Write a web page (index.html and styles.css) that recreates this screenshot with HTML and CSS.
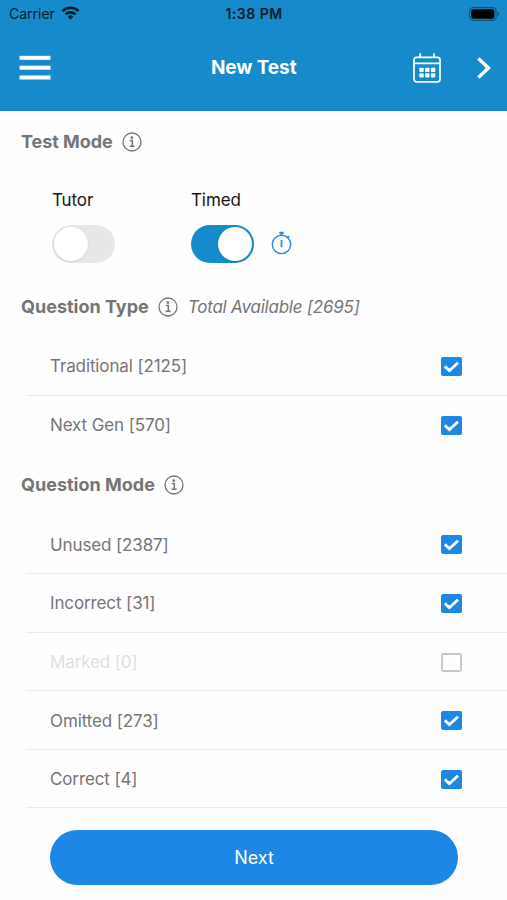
FILE: index.html
```html
<!DOCTYPE html>
<html lang="en">
<head>
<meta charset="utf-8">
<title>New Test</title>
<link rel="stylesheet" href="styles.css">
</head>
<body>
<svg class="defs" width="0" height="0">
  <symbol id="info" viewBox="0 0 20 20">
    <circle cx="10" cy="10" r="9" fill="none" stroke="currentColor" stroke-width="1.3"/>
    <circle cx="9.9" cy="5.6" r="1.35" fill="currentColor"/>
    <path d="M7.8 8.4h2.5v5.6M7.6 14.3h5" fill="none" stroke="currentColor" stroke-width="1.5"/>
  </symbol>
  <symbol id="check" viewBox="0 0 21 19">
    <rect width="21" height="19" rx="2" fill="#1e87e5"/>
    <path d="M3.8 9.4l4.6 4.2 8.6-7.8" fill="none" stroke="#fff" stroke-width="2.8"/>
  </symbol>
  <symbol id="empty" viewBox="0 0 21 19">
    <rect x="1" y="1" width="19" height="17" rx="1.5" fill="none" stroke="#c6c6c6" stroke-width="1.8"/>
  </symbol>
</svg>
<header class="header">
  <div class="status">
    <div class="carrier"><span>Carrier</span>
      <svg class="wifi" width="19" height="14" viewBox="0 0 18 14" fill="none" stroke="#071c28" stroke-width="2.6">
        <path d="M1 5.1a11.4 11.4 0 0 1 16 0M4 8.4a7.1 7.1 0 0 1 10 0"/>
        <path d="M9 13.6L6.1 10.8a4.1 4.1 0 0 1 5.8 0z" fill="#071c28" stroke="none"/>
      </svg>
    </div>
    <span class="time">1:38 PM</span>
    <svg class="battery" width="31" height="14" viewBox="0 0 31 14">
      <rect x=".6" y=".6" width="26.5" height="12.8" rx="3.5" fill="none" stroke="#0c5178" stroke-width="1.1"/>
      <rect x="2.2" y="2.2" width="23.2" height="9.6" rx="2" fill="#000"/>
      <path d="M28.5 4.8q3.2 2.2 0 4.4z" fill="#0c5178"/>
    </svg>
  </div>
  <nav class="nav">
    <svg class="menu" width="32" height="26" viewBox="0 0 32 26" fill="#fff">
      <rect x=".5" y=".8" width="31" height="4"/><rect x=".5" y="10.7" width="31" height="4"/><rect x=".5" y="20.5" width="31" height="4"/>
    </svg>
    <h1 class="title">New Test</h1>
    <div class="actions">
      <svg width="28" height="30" viewBox="0 0 28 30" fill="none" stroke="#fff" stroke-width="1.7">
        <rect x="1" y="4.3" width="26" height="24.5" rx="2.5"/>
        <path d="M1 10.4h26M7.2 .3v4.5M21 .3v4.5"/>
        <g fill="#fff" stroke="none">
          <rect x="6.3" y="14.8" width="4.4" height="4.2" rx=".8"/><rect x="12.1" y="14.8" width="4.4" height="4.2" rx=".8"/><rect x="17.9" y="14.8" width="4.4" height="4.2" rx=".8"/>
          <rect x="6.3" y="20.2" width="4.4" height="4.2" rx=".8"/><rect x="12.1" y="20.2" width="4.4" height="4.2" rx=".8"/><rect x="17.9" y="20.2" width="4.4" height="4.2" rx=".8"/>
        </g>
      </svg>
      <svg width="14" height="22" viewBox="0 0 14 22" fill="none" stroke="#fff" stroke-width="3.5">
        <path d="M1.4 1.4l10 9.6-10 9.6"/>
      </svg>
    </div>
  </nav>
</header>
<main>
  <div class="heading heading-mode"><h2>Test Mode</h2><svg class="info"><use href="#info"/></svg></div>
  <section class="modes">
    <div class="mode"><span class="label">Tutor</span><span class="switch"><span class="knob"></span></span></div>
    <div class="mode"><span class="label">Timed</span><span class="switch on"><span class="knob"></span></span></div>
    <svg class="timer" width="22" height="24" viewBox="0 0 22 24" fill="none" stroke="#2d88e6" stroke-width="1.4">
      <circle cx="10.5" cy="13.4" r="9.2"/>
      <path d="M10.5 9v7.2" stroke-width="1.7"/>
      <path d="M8.2 1.7h4.6M10.5 1.5v2.8" stroke-width="2"/>
      <path d="M16.8 6.5l1.2-1.3" stroke-width="2"/>
    </svg>
  </section>
  <div class="heading heading-type"><h2>Question Type</h2><svg class="info"><use href="#info"/></svg><em class="total">Total Available [2695]</em></div>
  <ul class="list">
    <li class="row"><span>Traditional [2125]</span><svg class="box"><use href="#check"/></svg></li>
    <li class="row last"><span>Next Gen [570]</span><svg class="box"><use href="#check"/></svg></li>
  </ul>
  <div class="heading heading-question"><h2>Question Mode</h2><svg class="info"><use href="#info"/></svg></div>
  <ul class="list">
    <li class="row"><span>Unused [2387]</span><svg class="box"><use href="#check"/></svg></li>
    <li class="row"><span>Incorrect [31]</span><svg class="box"><use href="#check"/></svg></li>
    <li class="row disabled"><span>Marked [0]</span><svg class="box"><use href="#empty"/></svg></li>
    <li class="row"><span>Omitted [273]</span><svg class="box"><use href="#check"/></svg></li>
    <li class="row"><span>Correct [4]</span><svg class="box"><use href="#check"/></svg></li>
  </ul>
  <button class="next">Next</button>
</main>
</body>
</html>
```
FILE: styles.css
```css
* { box-sizing: border-box; }
body { margin: 0; width: 507px; height: 900px; overflow: hidden; background: #fefefe; font-family: Inter, "Liberation Sans", sans-serif; color: #757575; }
h1, h2, ul { margin: 0; padding: 0; }
svg { display: block; flex: none; }
.defs { position: absolute; }
.header { height: 110.5px; background: #168acb; }
.status { display: grid; grid-template-columns: 1fr auto 1fr; align-items: center; height: 27px; padding: 0 7px 0 9px; color: #071c28; font-size: 14px; }
.carrier { display: flex; align-items: center; gap: 6px; }
.wifi { margin-top: -2px; }
.time { font-weight: 600; letter-spacing: .5px; margin-left: -1px; }
.battery { justify-self: end; }
.nav { display: grid; grid-template-columns: 1fr auto 1fr; align-items: center; height: 82px; padding: 0 16px 0 18.5px; }
.title { margin: 0 2px 0 0; color: #fff; font-size: 19px; font-weight: 700; line-height: 24px; letter-spacing: -.1px; }
.actions { display: flex; justify-content: flex-end; align-items: center; gap: 36.5px; }
.heading { display: flex; align-items: center; padding-left: 21px; }
.heading h2 { font-size: 18px; font-weight: 650; line-height: 24px; white-space: nowrap; }
.heading-mode { height: 62px; }
.heading-mode h2 { letter-spacing: -.06px; }
.heading-type { height: 61px; }
.heading-question { height: 61.2px; }
.info { width: 20px; height: 20px; margin-left: 9px; }
.total { margin-left: 10px; font-size: 17px; letter-spacing: -.22px; }
.modes { display: flex; align-items: flex-end; height: 103.5px; padding: 0 0 13px 52px; }
.mode { width: 139px; }
.label { display: block; margin-bottom: 13px; color: #151515; font-size: 17px; line-height: 24px; letter-spacing: -.1px; }
.switch { display: flex; width: 63px; height: 38px; padding: 2px; border-radius: 19px; background: #e7e7e8; }
.switch.on { justify-content: flex-end; background: #168acb; }
.knob { width: 34px; height: 34px; border-radius: 50%; background: #fff; box-shadow: 0 1px 3px rgba(0,0,0,.1); }
.timer { margin: 0 0 8px -59px; }
.list { list-style: none; margin-left: 26px; }
.row { display: flex; align-items: center; justify-content: space-between; height: 58.6px; padding: 1.4px 45px 0 24px; border-bottom: 1.5px solid #ebebeb; font-size: 17px; letter-spacing: -.12px; }
.row.last { border-color: transparent; }
.disabled span { color: #dedede; }
.box { width: 21px; height: 19px; }
.next { display: block; width: 408px; height: 55px; margin: 21.6px 0 0 50px; border: 0; border-radius: 28px; background: #1e87e5; color: #fff; font: 18px Inter, "Liberation Sans", sans-serif; }
```
